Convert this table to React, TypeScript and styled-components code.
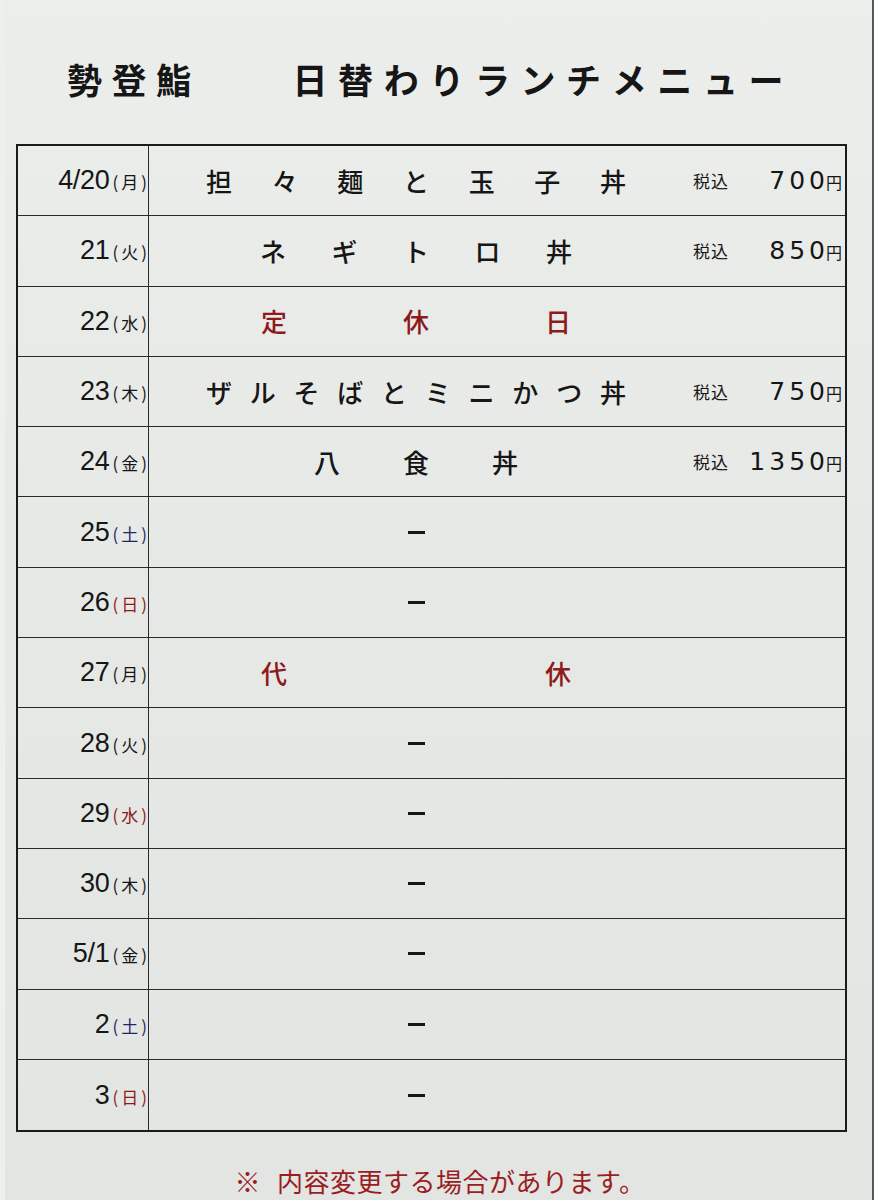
import React from 'react';
import styled, {createGlobalStyle} from 'styled-components';

const GlobalStyle = createGlobalStyle`
  html, body {
    margin: 0;
    padding: 0;
    background: #e7e9e7;
  }
  * {
    box-sizing: border-box;
  }
`

const CJK = `"Noto Sans CJK JP", "Noto Sans", sans-serif`
const LATIN = `"Liberation Sans", Arial, sans-serif`
const RED = '#8e1a1c'
const NAVY = '#1f2866'
const INK = '#161616'

interface DayEntry {
    date: string,
    day: string,
    dayColor?: string,
    menu?: string[],
    spread?: number,
    red?: boolean,
    price?: string
}

const days: DayEntry[] = [
    {date: '4/20', day: '月', menu: ['担', '々', '麺', 'と', '玉', '子', '丼'], spread: 420, price: '700'},
    {date: '21', day: '火', menu: ['ネ', 'ギ', 'ト', 'ロ', '丼'], spread: 312, price: '850'},
    {date: '22', day: '水', menu: ['定', '休', '日'], spread: 310, red: true},
    {date: '23', day: '木', menu: ['ザ', 'ル', 'そ', 'ば', 'と', 'ミ', 'ニ', 'か', 'つ', '丼'], spread: 420, price: '750'},
    {date: '24', day: '金', menu: ['八', '食', '丼'], spread: 204, price: '1350'},
    {date: '25', day: '土', dayColor: NAVY},
    {date: '26', day: '日', dayColor: RED},
    {date: '27', day: '月', menu: ['代', '休'], spread: 310, red: true},
    {date: '28', day: '火'},
    {date: '29', day: '水', dayColor: RED},
    {date: '30', day: '木'},
    {date: '5/1', day: '金'},
    {date: '2', day: '土', dayColor: NAVY},
    {date: '3', day: '日', dayColor: RED},
]

const Paper = styled.div`
  position: relative;
  width: 874px;
  height: 1200px;
  overflow: hidden;
  background: linear-gradient(180deg, #eceeec 0%, #e7e9e7 45%, #e3e5e3 100%);
  border-left: 5px solid #eef0ee;
  border-right: 2px solid #55585a;
  padding-top: 56px;
`

const Header = styled.header`
  display: flex;
  align-items: center;
  height: 44px;
  padding-left: 62px;
  gap: 92px;
  font-family: ${CJK};
  font-weight: 700;
  font-size: 35px;
  color: ${INK};
`

const TitleText = styled.h1<{ $spacing: number }>`
  margin: 0;
  font: inherit;
  letter-spacing: ${({$spacing}) => $spacing}px;
  line-height: 1;
`

const Table = styled.div`
  margin: 44px 0 0 11px;
  width: 831px;
  border: 2.5px solid #1b1b1b;
  display: flex;
  flex-direction: column;
`

const Row = styled.div`
  display: grid;
  grid-template-columns: 131px 534px 1fr;
  height: 70.3px;
  border-bottom: 1.5px solid #2a2a2a;

  &:last-child {
    border-bottom: none;
  }
`

const DateCell = styled.div`
  display: flex;
  align-items: center;
  justify-content: flex-end;
  padding-right: 1px;
  border-right: 1.5px solid #2a2a2a;
  color: ${INK};
`

const DateNum = styled.span`
  font-family: ${LATIN};
  font-size: 27px;
  letter-spacing: -0.3px;
  margin-right: 3px;
`

const DayMark = styled.span<{ $color?: string }>`
  font-family: ${CJK};
  font-size: 17px;
  color: ${({$color}) => $color || INK};
  padding-top: 2px;

  b {
    font-weight: 400;
    margin: 0 3px;
  }
`

const MenuCell = styled.div`
  display: flex;
  align-items: center;
  justify-content: center;
`

const Spread = styled.div<{ $red?: boolean }>`
  display: flex;
  justify-content: space-between;
  font-family: ${CJK};
  font-weight: 500;
  font-size: 26px;
  line-height: 1;
  color: ${({$red}) => $red ? RED : INK};
`

const Dash = styled.span`
  display: block;
  width: 17px;
  height: 3px;
  background: ${INK};
`

const PriceCell = styled.div`
  display: flex;
  align-items: center;
  justify-content: space-between;
  padding: 0 3px 0 10px;
  color: ${INK};
`

const TaxLabel = styled.span`
  font-family: ${CJK};
  font-size: 17px;
  letter-spacing: 1px;
`

const Amount = styled.span`
  display: flex;
  align-items: baseline;
  font-family: "DejaVu Sans", ${LATIN};
  font-size: 25px;

  i {
    font-style: normal;
  }

  i + i {
    margin-left: 4px;
  }
`

const Yen = styled.span`
  font-family: ${CJK};
  font-size: 16px;
  margin-left: 1px;
`

const Notice = styled.p`
  margin: 36px 0 0;
  padding-left: 3px;
  text-align: center;
  font-family: ${CJK};
  font-size: 26px;
  line-height: 1;
  color: #9a1d1f;
  letter-spacing: 0.5px;

  span {
    margin-left: 16px;
  }
`

function DayRow({entry}: { entry: DayEntry }) {
    return (
        <Row>
            <DateCell>
                <DateNum>{entry.date}</DateNum>
                <DayMark $color={entry.dayColor}>(<b>{entry.day}</b>)</DayMark>
            </DateCell>
            <MenuCell>
                {entry.menu ? (
                    <Spread $red={entry.red} style={{width: entry.spread}}>
                        {entry.menu.map((ch, i) => <span key={i}>{ch}</span>)}
                    </Spread>
                ) : (
                    <Dash aria-label="−"/>
                )}
            </MenuCell>
            <PriceCell>
                {entry.price && (
                    <>
                        <TaxLabel>税込</TaxLabel>
                        <Amount>
                            {entry.price.split('').map((n, i) => <i key={i}>{n}</i>)}
                            <Yen>円</Yen>
                        </Amount>
                    </>
                )}
            </PriceCell>
        </Row>
    )
}

export default function App() {
    return (
        <>
            <GlobalStyle/>
            <Paper>
                <Header>
                    <TitleText $spacing={9.5}>勢登鮨</TitleText>
                    <TitleText $spacing={10.6}>日替わりランチメニュー</TitleText>
                </Header>
                <Table>
                    {days.map((d) => <DayRow key={d.date} entry={d}/>)}
                </Table>
                <Notice>※<span>内容変更する場合があります。</span></Notice>
            </Paper>
        </>
    );
}
